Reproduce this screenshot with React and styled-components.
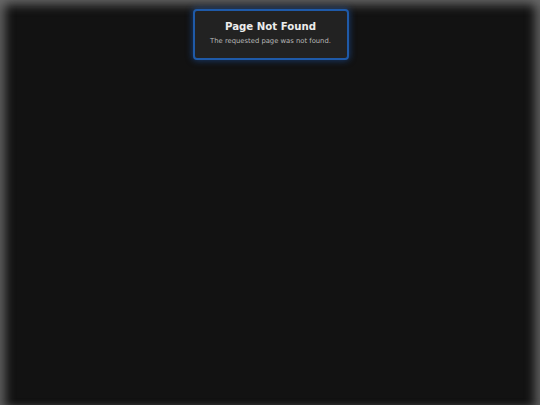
import styled, { createGlobalStyle } from "styled-components";

const Global = createGlobalStyle`
  html, body {
    margin: 0;
    padding: 0;
    background: #121212;
  }
  body {
    font-family: "DejaVu Sans", "Liberation Sans", sans-serif;
  }
`;

const Screen = styled.div`
  height: 405px;
  background: #121212;
  box-shadow: inset 10px 0 10px -4px rgba(110, 110, 110, 0.75),
    inset -10px 0 10px -4px rgba(110, 110, 110, 0.75),
    inset 0 10px 10px -4px rgba(110, 110, 110, 0.75);
  display: flex;
  justify-content: center;
  align-items: flex-start;
  padding-top: 9px;
  box-sizing: border-box;
  overflow: hidden;
`;

const Toast = styled.div`
  width: 156px;
  height: 51px;
  box-sizing: border-box;
  margin-left: 1px;
  background: #222222;
  border: 2px solid #1f5aa8;
  border-radius: 4px;
  box-shadow: 0 0 6px 1px rgba(30, 90, 180, 0.5);
  display: flex;
  flex-direction: column;
  align-items: center;
  padding-top: 10px;
`;

const Title = styled.div`
  font-size: 10.2px;
  font-weight: bold;
  color: #ececec;
  line-height: 12px;
`;

const Message = styled.div`
  margin-top: 4px;
  font-size: 6.8px;
  color: #b8b8b8;
  line-height: 9px;
`;

export default function App() {
  return (
    <>
      <Global />
      <Screen>
        <Toast>
          <Title>Page Not Found</Title>
          <Message>The requested page was not found.</Message>
        </Toast>
      </Screen>
    </>
  );
}
